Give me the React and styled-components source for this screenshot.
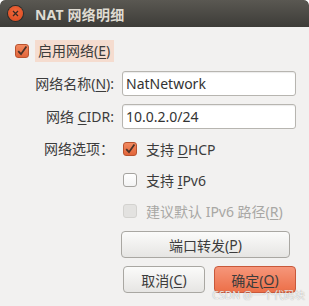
import React from 'react'
import styled, { createGlobalStyle } from 'styled-components'

const GlobalStyle = createGlobalStyle`
  html, body { margin: 0; padding: 0; background: #ffffff; }
  body { font-family: 'Noto Sans', 'Noto Sans CJK SC', sans-serif; }
`

const Window = styled.div`
  position: relative;
  width: 309px;
  height: 306px;
  background: #f2f1f0;
  border-radius: 5px 5px 0 0;
  overflow: hidden;
  color: #3c3c3c;
  font-size: 14px;
`

const TitleBar = styled.div`
  height: 27px;
  display: flex;
  align-items: center;
  padding-left: 8px;
  gap: 12px;
  background: linear-gradient(#5a5852, #3d3c38);
  border-radius: 5px 5px 0 0;
`

const CloseBtn = styled.div`
  width: 15px;
  height: 15px;
  border-radius: 50%;
  background: radial-gradient(circle at 50% 40%, #f26a3e, #d9471c);
  box-shadow: 0 0 0 1px #2e2d2a;
  display: flex;
  align-items: center;
  justify-content: center;
`

const Title = styled.span`
  font-family: 'Noto Sans', 'Noto Sans CJK SC', sans-serif;
  font-weight: bold;
  font-size: 14px;
  color: #dfdbd2;
  letter-spacing: 0.2px;
`

const Body = styled.div`
  padding: 13px 13px 0 15px;
  display: flex;
  flex-direction: column;
`

const EnableRow = styled.div`
  display: flex;
  align-items: center;
  gap: 6px;
  height: 22px;
`

const Highlight = styled.span`
  background: #f5dccf;
  padding: 0 3px;
  height: 22px;
  line-height: 22px;
  width: 73px;
`

const Form = styled.div`
  display: grid;
  grid-template-columns: 99px 174px;
  column-gap: 8px;
  row-gap: 8px;
  margin-top: 9px;
`

const Label = styled.div`
  text-align: right;
  height: ${p => p.$h || 25}px;
  line-height: ${p => p.$h || 25}px;
  white-space: nowrap;
  grid-row: ${p => p.$span || 'auto'};
`

const Input = styled.div`
  height: 25px;
  box-sizing: border-box;
  border: 1px solid #b7b5b0;
  border-radius: 3px;
  background: #ffffff;
  box-shadow: inset 0 1px 1px rgba(0, 0, 0, 0.08);
  padding-left: 3px;
  line-height: 23px;
  font-size: 14px;
  color: #333;
`

const OptionRow = styled.div`
  display: flex;
  align-items: center;
  gap: 9px;
  height: 23px;
  padding-left: 1px;
  color: ${p => (p.$disabled ? '#a8a7a4' : '#3c3c3c')};
  grid-column: 2;
`

const Box = styled.span`
  width: 14px;
  height: 14px;
  box-sizing: border-box;
  border-radius: 3px;
  flex-shrink: 0;
  display: flex;
  align-items: center;
  justify-content: center;
  border: 1px solid
    ${p => (p.$checked ? '#b9532f' : p.$disabled ? '#d3d2cf' : '#a5a39f')};
  background: ${p =>
    p.$checked
      ? 'linear-gradient(#f28a60, #e2653a)'
      : p.$disabled
      ? '#e3e2e0'
      : 'linear-gradient(#ffffff, #f3f3f3)'};
`

const Button = styled.div`
  height: 27px;
  box-sizing: border-box;
  border-radius: 4px;
  display: flex;
  align-items: center;
  justify-content: center;
  border: 1px solid ${p => (p.$primary ? '#c8583a' : '#a9a7a2')};
  background: ${p =>
    p.$primary
      ? 'linear-gradient(#f6967a, #ec6f48)'
      : 'linear-gradient(#fbfbfa, #e6e5e3)'};
  color: #3c3c3c;
`

const PortButton = styled(Button)`
  grid-column: 2;
  width: 169px;
  margin-left: -1px;
  margin-top: 1px;
`

const ButtonRow = styled.div`
  grid-column: 2;
  display: flex;
  gap: 9px;
  padding-left: 1px;
`

const ActionButton = styled(Button)`
  width: 82px;
`

const Mn = styled.u`
  text-decoration-thickness: 1px;
  text-underline-offset: 2px;
`

const Watermark = styled.span`
  position: absolute;
  right: 4px;
  bottom: 4px;
  font-size: 10.5px;
  color: rgba(255, 255, 255, 0.85);
  text-shadow: 0 0 1px rgba(120, 120, 120, 0.8);
`

const Check = () => (
  <svg width="12" height="12" viewBox="0 0 12 12">
    <path d="M2.2 6.2 L5 9.2 L10.4 1.6" fill="none" stroke="#4a3228" strokeWidth="1.8" />
  </svg>
)

const CheckBox = ({ checked, disabled }) => (
  <Box $checked={checked} $disabled={disabled}>
    {checked && <Check />}
  </Box>
)

const App = () => {
  return (
    <Window>
      <GlobalStyle />
      <TitleBar>
        <CloseBtn>
          <svg width="7" height="7" viewBox="0 0 7 7">
            <path d="M1 1 L6 6 M6 1 L1 6" stroke="#3a2a22" strokeWidth="1.3" />
          </svg>
        </CloseBtn>
        <Title>NAT 网络明细</Title>
      </TitleBar>
      <Body>
        <EnableRow>
          <CheckBox checked />
          <Highlight>启用网络(<Mn>E</Mn>)</Highlight>
        </EnableRow>
        <Form>
          <Label>网络名称(<Mn>N</Mn>):</Label>
          <Input>NatNetwork</Input>
          <Label>网络 <Mn>C</Mn>IDR:</Label>
          <Input>10.0.2.0/24</Input>
          <Label $h={23} $span="3 / span 1">网络选项：</Label>
          <OptionRow style={{ gridRow: 3 }}>
            <CheckBox checked />
            <span>支持 <Mn>D</Mn>HCP</span>
          </OptionRow>
          <OptionRow>
            <CheckBox />
            <span>支持 <Mn>I</Mn>Pv6</span>
          </OptionRow>
          <OptionRow $disabled>
            <CheckBox disabled />
            <span>建议默认 IPv6 路径(<Mn>R</Mn>)</span>
          </OptionRow>
          <PortButton>端口转发(<Mn>P</Mn>)</PortButton>
          <ButtonRow>
            <ActionButton>取消(<Mn>C</Mn>)</ActionButton>
            <ActionButton $primary>确定(<Mn>O</Mn>)</ActionButton>
          </ButtonRow>
        </Form>
      </Body>
      <Watermark>CSDN @一个代码块</Watermark>
    </Window>
  )
}

export default App
